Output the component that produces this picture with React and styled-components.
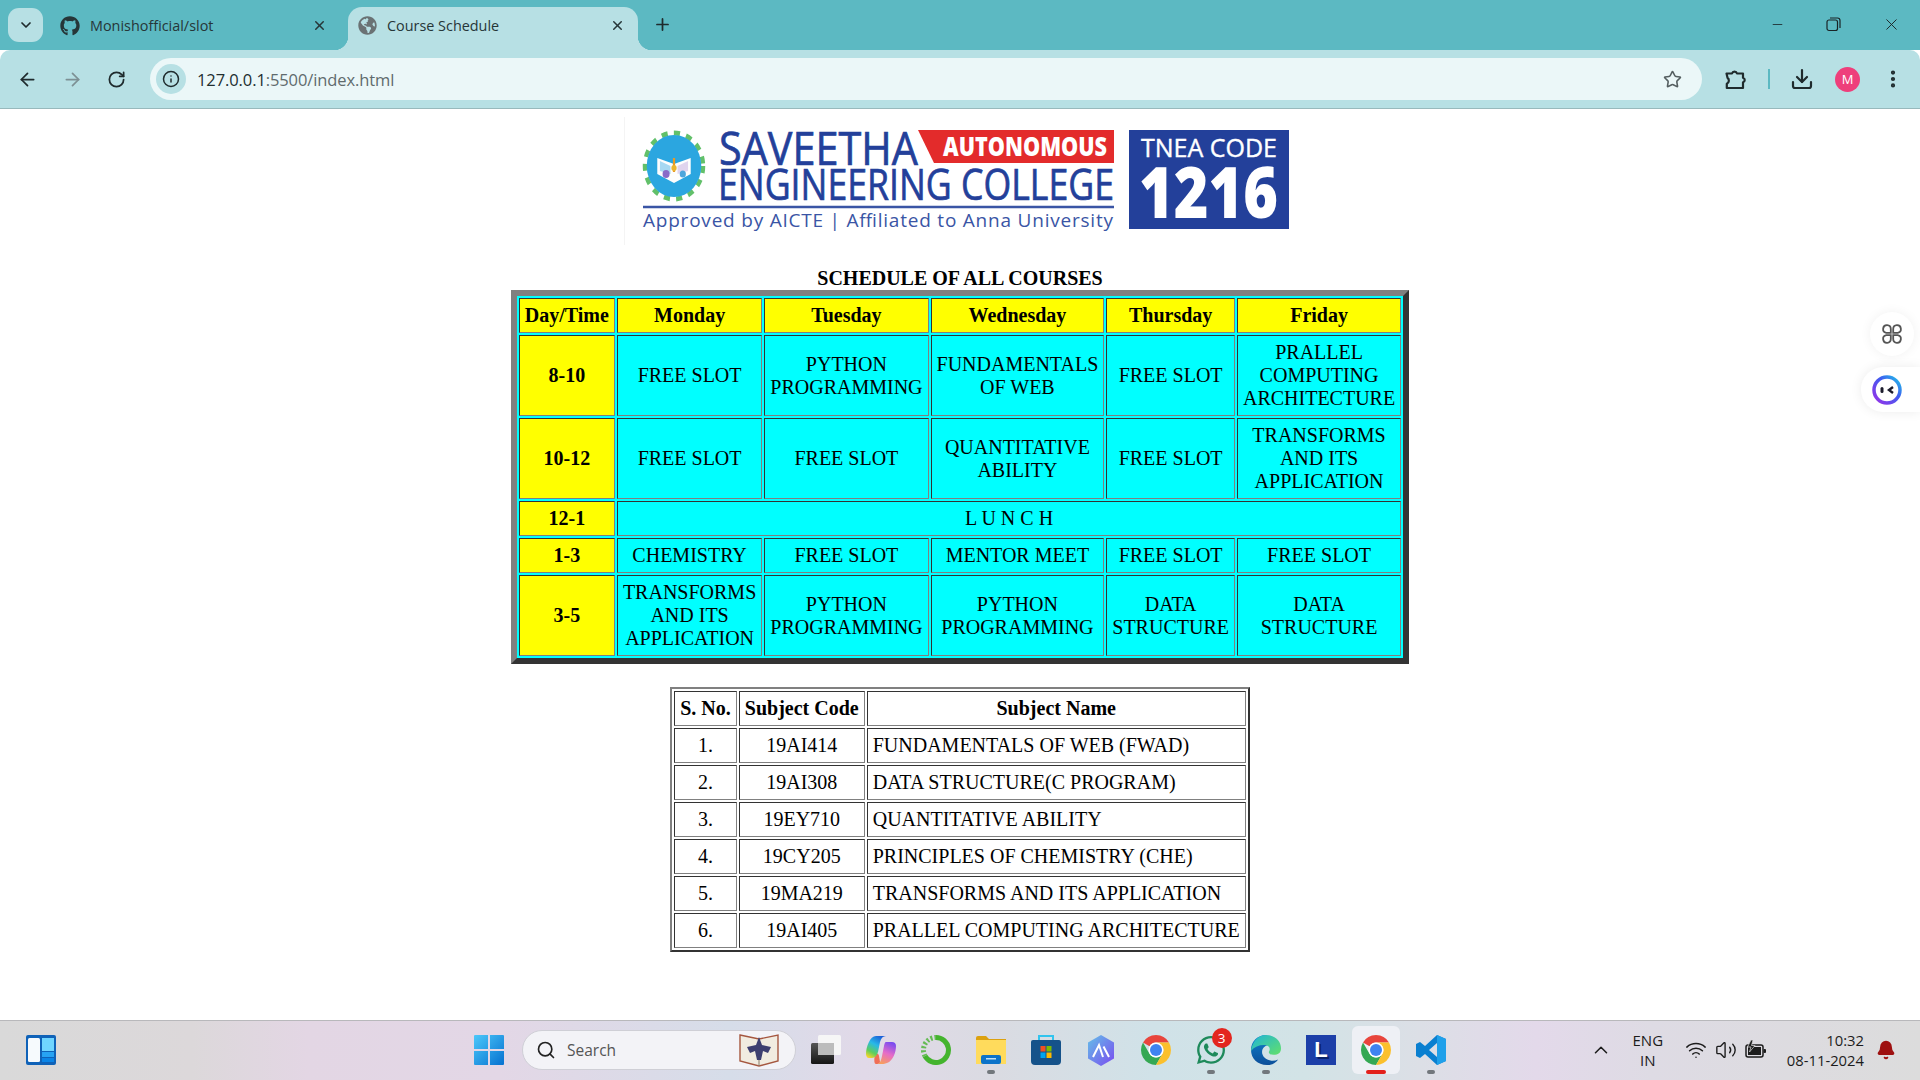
import React from "react";
import styled, { createGlobalStyle } from "styled-components";
import { ChevronDown, ChevronUp, X, Plus, Minus, ArrowLeft, ArrowRight, RotateCw, Info, Star, Download, Search, Wifi, Volume2, Bell, EllipsisVertical } from "lucide-react";
import { FaGithub, FaGlobeAmericas, FaWhatsapp } from "react-icons/fa";

const Global = createGlobalStyle`
  html, body { margin: 0; padding: 0; background: #fff; }
  body { font-family: "Open Sans", "Liberation Sans", sans-serif; overflow: hidden; }
`;

const Shell = styled.div`
  width: 1920px; height: 1080px; display: flex; flex-direction: column; overflow: hidden;
`;
const TabStrip = styled.div`
  height: 50px; flex: none; background: #5cb9c2; display: flex; align-items: flex-start; padding-left: 8px; color: #1f2b2d;
`;
const TabMenu = styled.div`
  width: 35px; height: 34px; margin-top: 8px; border-radius: 11px; background: #b7e0e4; display: flex; align-items: center; justify-content: center;
`;
const Tab = styled.div`
  position: relative; width: ${p => p.$active ? 290 : 292}px; height: 43px; margin-top: 7px; box-sizing: border-box; display: flex; align-items: center;
  margin-left: ${p => p.$gap}px; padding: 0 13px 6px ${p => p.$active ? 10 : 12}px; gap: 10px;
  font-size: 14.4px; color: #263638; border-radius: 14px 14px 0 0;
  background: ${p => p.$active ? "#b7e0e4" : "transparent"};
  ${p => p.$active && `
    &::before, &::after { content: ""; position: absolute; bottom: 0; width: 14px; height: 14px; }
    &::before { left: -14px; background: radial-gradient(circle at 0 0, transparent 14px, #b7e0e4 14.5px); }
    &::after { right: -14px; background: radial-gradient(circle at 100% 0, transparent 14px, #b7e0e4 14.5px); }
  `}
`;
const TabTitle = styled.span`
  flex: 1; white-space: nowrap;
`;
const NewTab = styled.div`
  margin: 15px 0 0 15px; display: flex;
`;
const WindowControls = styled.div`
  margin-left: auto; display: flex; align-items: center; height: 49px; padding-right: 19px; gap: 40px; color: #1a2426;
`;
const RestoreIcon = () => (
  <svg width="17" height="17" viewBox="0 0 17 17" fill="none" stroke="currentColor" strokeWidth="1.2">
    <rect x="2" y="4" width="10.5" height="10.5" rx="2" />
    <path d="M5 2h7.5a2.5 2.5 0 0 1 2.5 2.5V12" />
  </svg>
);
const PuzzleIcon = () => (
  <svg width="24" height="24" viewBox="0 0 24 24" fill="none" stroke="currentColor" strokeWidth="2.2" strokeLinejoin="round">
    <path d="M3.5 6.5H9a2.6 2.6 0 0 1 5 0H20v4.2a2.4 2.4 0 0 1 0 4.6V21H3.8v-4.2c2.6-1.4 2.6-4.6 .8-5.8Z" />
  </svg>
);
const Toolbar = styled.div`
  height: 58px; flex: none; background: #b7e0e4; border-bottom: 1px solid #98b9bc; border-radius: 10px 10px 0 0;
  display: flex; align-items: center; color: #1f2b2d;
`;
const NavGroup = styled.div`
  width: 150px; flex: none; box-sizing: border-box; padding-left: 17px; display: flex; gap: 24px; align-items: center;
`;
const Omnibox = styled.div`
  width: 1552px; height: 42px; flex: none; border-radius: 21px; background: #ebf7f8; display: flex; align-items: center; padding: 0 20px 0 6px; box-sizing: border-box;
`;
const InfoChip = styled.div`
  width: 30px; height: 30px; border-radius: 50%; background: #b7e0e4; display: flex; align-items: center; justify-content: center; margin-right: 11px;
`;
const Url = styled.div`
  font-size: 16.5px; color: #222e30; flex: 1; letter-spacing: -0.1px;
`;
const UrlRest = styled.span`
  color: #5f6b6d;
`;
const ToolIcons = styled.div`
  flex: 1; display: flex; align-items: center; padding-left: 21px;
`;
const ToolSeparator = styled.div`
  width: 2px; height: 20px; background: #5cb9c2; margin: 0 20px 0 21px;
`;
const Avatar = styled.div`
  width: 25px; height: 25px; border-radius: 50%; background: #ee3f7b; color: #fff; font-size: 13px; display: flex; align-items: center; justify-content: center; margin: 0 22px 0 21px;
`;
const Page = styled.div`
  flex: 1; background: #fff; position: relative; display: flex; flex-direction: column; align-items: center; overflow: hidden;
`;
const LogoSvg = styled.svg`
  display: block; flex: none;
`;
const Zoomed = styled.div`
  zoom: 1.25; font-family: "Liberation Serif", "Times New Roman", serif; font-size: 16px; color: #000; display: flex; flex-direction: column; align-items: center;
`;
const ScheduleTable = styled.table`
  width: 718px; border-collapse: separate; border-spacing: 2px; background: #00ffff; border: 5px solid; border-color: #808080 #333 #333 #808080;
  caption { font-weight: bold; }
`;
const SubjectTable = styled.table`
  margin-top: 18px; border-collapse: separate; border-spacing: 2px; background: #fff; border: 2px solid; border-color: #808080 #333 #333 #808080;
`;
const cell = `
  padding: 4px; border: 1px solid; border-color: #333 #808080 #808080 #333; text-align: center;
`;
const Head = styled.th`
  ${cell} font-weight: bold; background: ${p => p.$fill || "transparent"};
`;
const Cell = styled.td`
  ${cell} background: ${p => p.$fill || "transparent"}; text-align: ${p => p.$left ? "left" : "center"};
`;
const SideDot = styled.div`
  position: absolute; right: 6px; top: 203px; width: 44px; height: 44px; border-radius: 50%; background: #fff; box-shadow: 0 0 12px rgba(0,0,0,.06); display: flex; align-items: center; justify-content: center;
`;
const SidePill = styled.div`
  position: absolute; right: 0; top: 258px; width: 59px; height: 45px; border-radius: 22px 0 0 22px; background: #fff; box-shadow: 0 0 12px rgba(0,0,0,.08); display: flex; align-items: center; padding-left: 11px; box-sizing: border-box;
`;
const Taskbar = styled.div`
  height: 60px; flex: none; box-sizing: border-box; border-top: 1px solid #b8b8bb; padding-bottom: 1px; display: flex; align-items: center; position: relative;
  background: linear-gradient(90deg, #d9d9d9 0%, #dcd8da 10%, #e3d6e4 16%, #e3d7e6 26%, #d6dde9 38%, #e1d9e8 45%, #dadbe2 52%, #d0e2e8 60%, #d2e3e6 68%, #dcdfe6 74%, #e3d9ea 80%, #dedbe4 86%, #dcdcdc 100%);
`;
const Widgets = styled.div`
  width: 461px; flex: none; box-sizing: border-box; padding-left: 26px; display: flex;
`;
const Slot = styled.div`
  position: relative; width: 55px; height: 48px; flex: none; display: flex; align-items: center; justify-content: center;
  color: ${p => p.$color || "inherit"};
  ${p => p.$active && `
    &::before { content: ""; position: absolute; top: 0; bottom: 0; left: 3.5px; right: 3.5px; border-radius: 6px; background: #eef0f5; }
    & > * { position: relative; }
  `}
`;
const RunningDot = styled.span`
  position: absolute !important; bottom: 0; left: 50%; transform: translateX(-50%); height: 4px; border-radius: 2px;
  width: ${p => p.$active ? 20 : 8}px; background: ${p => p.$active ? "#e3201b" : "#72777c"};
`;
const Badge = styled.span`
  position: absolute; top: 2px; right: 7px; width: 20px; height: 20px; border-radius: 50%; background: #e3261f; color: #fff; font-size: 13.5px; display: flex; align-items: center; justify-content: center;
`;
const SearchPill = styled.div`
  width: 274px; height: 40px; flex: none; margin: 0 2.5px 0 6px; box-sizing: border-box; border-radius: 20px; background: #f3f3f7; border: 1px solid #cfcfd6; display: flex; align-items: center; padding: 0 16px 0 13px; font-size: 15.5px; color: #555;
`;
const SearchLabel = styled.span`
  flex: 1; margin-left: 11px;
`;
const Tray = styled.div`
  margin-left: auto; display: flex; align-items: center; color: #1c1c1c; padding-right: 24px;
`;
const Lang = styled.div`
  width: 50px; text-align: center; font-size: 15px; line-height: 20px; margin: 0 12px 0 11px;
`;
const TrayIcons = styled.div`
  display: flex; align-items: center; gap: 8px;
`;
const Clock = styled.div`
  text-align: right; font-size: 14.8px; line-height: 20px; margin: 0 12px 0 20px;
`;

const ChromeLogo = ({ size = 30 }) => (
  <svg width={size} height={size} viewBox="4 4 40 40">
    <path fill="#e8453c" d="M24 4A20 20 0 0 1 41.32 14H24A10 10 0 0 0 15.34 19L6.68 14A20 20 0 0 1 24 4Z" />
    <path fill="#34a853" d="M6.68 14A20 20 0 0 0 24 44L32.66 29A10 10 0 0 1 15.34 29Z" />
    <path fill="#fbc02d" d="M41.32 14H24A10 10 0 0 1 32.66 29L24 44A20 20 0 0 0 41.32 14Z" />
    <circle cx="24" cy="24" r="10" fill="#fff" />
    <circle cx="24" cy="24" r="8" fill="#3f83f0" />
  </svg>
);
const WidgetsIcon = () => (
  <svg width="30" height="30" viewBox="0 0 30 30">
    <rect x="0" y="0" width="30" height="30" rx="2" fill="#0f62b8" />
    <rect x="2" y="3" width="12" height="24" rx="1.5" fill="#f6fafd" />
    <rect x="16" y="3" width="12" height="13" fill="#6fd5ff" />
    <rect x="16" y="17" width="12" height="5" fill="#27a3f3" />
    <rect x="16" y="23" width="12" height="4" fill="#0a84e6" />
  </svg>
);
const StartIcon = () => (
  <svg width="30" height="30" viewBox="0 0 30 30">
    <defs><linearGradient id="st" x1="0" y1="0" x2="1" y2="1"><stop offset="0" stopColor="#4cc8fa" /><stop offset="1" stopColor="#0671d0" /></linearGradient></defs>
    <path fill="url(#st)" d="M1 0h13v14H0V1a1 1 0 0 1 1-1Zm15 0h13a1 1 0 0 1 1 1v13H16ZM0 16h14v14H1a1 1 0 0 1-1-1Zm16 0h14v13a1 1 0 0 1-1 1H16Z" />
  </svg>
);
const BookIcon = () => (
  <svg width="40" height="36" viewBox="0 0 40 36">
    <path d="M1 3 20 7l19-4v26l-19 5-19-5Z" fill="#f1ece0" stroke="#a5573f" strokeWidth="1.4" />
    <path d="M20 7v27" stroke="#8a7c68" />
    <path d="M20 5l3 8 9 2-3 6-5-2-2 9h-4l-2-9-5 2-3-6 9-2Z" fill="#3d3f70" />
  </svg>
);
const StackIcon = () => (
  <svg width="30" height="30" viewBox="0 0 30 30">
    <defs><linearGradient id="sk" x1="0" y1="0" x2="0" y2="1"><stop offset="0" stopColor="#555" /><stop offset="1" stopColor="#151515" /></linearGradient></defs>
    <rect x="0" y="8" width="23" height="21" rx="1.5" fill="url(#sk)" />
    <rect x="7" y="0" width="23" height="20" rx="1.5" fill="#f6f6f6" />
    <rect x="7" y="8" width="16" height="12" fill="#bcbcbc" />
  </svg>
);
const CopilotIcon = () => (
  <svg width="30" height="28" viewBox="0 0 30 28">
    <defs>
      <linearGradient id="c1" x1="0.7" y1="0" x2="0.2" y2="1"><stop offset="0" stopColor="#1c5fd8" /><stop offset=".4" stopColor="#28b8e8" /><stop offset=".75" stopColor="#5fce5a" /><stop offset="1" stopColor="#f6d42c" /></linearGradient>
      <linearGradient id="c2" x1="0.7" y1="0" x2="0.3" y2="1"><stop offset="0" stopColor="#7a4cf0" /><stop offset=".5" stopColor="#e66cc8" /><stop offset="1" stopColor="#f8a05a" /></linearGradient>
    </defs>
    <path fill="url(#c2)" d="M20 6h6c2.500 0 4 1.500 4 4 0 6-3 15-9 17-2 1-5 1-7 1h-4c4 0 5-3 6-8l2-10c.4-2 1-4 2-4Z" />
    <path fill="#f25a3c" d="M9 17c2 0 4 1 4 3l1 6c-1 1.500-2 2-4 2-2 0-2-4-1-11Z" opacity=".85" />
    <path fill="url(#c1)" d="M10 0h10c-3 0-5 2-6 6l-2 10c-1 3-3 6-6 6H3c-2 0-3-2-3-4 0-7 4-18 10-18Z" />
  </svg>
);
const RingIcon = () => (
  <svg width="30" height="30" viewBox="0 0 30 30" fill="none">
    <path d="M15 2.500A12.500 12.500 0 1 1 4 21" stroke="#44b42e" strokeWidth="5" />
    <path d="M4 21A12.500 12.500 0 0 1 15 2.500" stroke="#66bb55" strokeWidth="5" strokeDasharray="2 2" />
  </svg>
);
const FolderIcon = () => (
  <svg width="30" height="28" viewBox="0 0 30 28">
    <path fill="#dca10f" d="M0 2a2 2 0 0 1 2-2h8l3 3h17v6H0Z" />
    <rect x="0" y="4" width="30" height="24" fill="#ffdb5c" />
    <rect x="5" y="19" width="20" height="9" rx="2" fill="#0c73c9" />
    <rect x="10" y="22" width="10" height="1.500" fill="#bfe0f6" />
  </svg>
);
const StoreIcon = () => (
  <svg width="30" height="30" viewBox="0 0 30 30">
    <path d="M8 5V1h14v4" fill="none" stroke="#32c4ee" strokeWidth="2" />
    <path fill="#15528a" d="M0 7a2 2 0 0 1 2-2h26a2 2 0 0 1 2 2v19a4 4 0 0 1-4 4H4a4 4 0 0 1-4-4Z" />
    <rect x="9.500" y="11" width="5" height="5.500" fill="#f25022" />
    <rect x="15.500" y="11" width="5" height="5.500" fill="#7fba00" />
    <rect x="9.500" y="17.500" width="5" height="5.500" fill="#00a4ef" />
    <rect x="15.500" y="17.500" width="5" height="5.500" fill="#ffb900" />
  </svg>
);
const HexIcon = () => (
  <svg width="28" height="31" viewBox="0 0 28 31">
    <defs><linearGradient id="hx" x1="0" y1="0" x2="1" y2="1"><stop offset="0" stopColor="#64c0e8" /><stop offset="1" stopColor="#7a4bf0" /></linearGradient></defs>
    <path fill="url(#hx)" d="M14 0 27 7.500v16L14 31 1 23.500v-16Z" />
    <path d="M6 22 12 10l4 12M16.500 11.500 22 22" fill="none" stroke="#fff" strokeWidth="2" />
  </svg>
);
const EdgeIcon = () => (
  <svg width="30" height="30" viewBox="0 0 32 32">
    <defs>
      <linearGradient id="e1" x1="0" y1="0" x2="1" y2="1"><stop offset="0" stopColor="#1fb4d8" /><stop offset="1" stopColor="#63e06a" /></linearGradient>
      <linearGradient id="e2" x1="0" y1="0" x2="0" y2="1"><stop offset="0" stopColor="#1080cc" /><stop offset="1" stopColor="#0c4f9a" /></linearGradient>
    </defs>
    <path fill="url(#e2)" d="M16 0C7 0 0 7 0 16c0 9 7 16 17 16 5 0 9-2 12-6-6 3-15 1-17-6-1-5 2-8 6-9 2-3 3-5-2-11Z" />
    <path fill="url(#e1)" d="M16 0c9 0 16 6 16 14 0 5-3 7-8 7-3 0-5-1-5-3 2-3 1-6-3-7-5-1-12 1-16 6C1 8 7 0 16 0Z" />
  </svg>
);
const LIcon = styled.div`
  width: 30px; height: 30px; background: #1c3fa8; color: #fff; font: bold 22px "Liberation Sans", sans-serif; display: flex; align-items: center; justify-content: center; text-shadow: 2px 2px 0 #0b2268;
`;
const VsIcon = () => (
  <svg width="30" height="30" viewBox="0 0 30 30">
    <path fill="#0a7fd0" d="M21 0 30 4v22l-9 4-12-11-5 4-4-2V9l4-2 5 4ZM21 8l-8 7 8 7Z" />
    <path fill="#1fa0ea" d="M21 0 30 4v22l-9 4Z" />
  </svg>
);
const BatteryIcon = () => (
  <svg width="22" height="20" viewBox="0 0 22 20">
    <rect x="1" y="5" width="17" height="12" rx="2" fill="none" stroke="#1c1c1c" strokeWidth="1.500" />
    <rect x="3" y="7" width="13" height="8" fill="#1c1c1c" />
    <rect x="18.500" y="9" width="2.500" height="4" rx="1" fill="#1c1c1c" />
    <path d="M6 0 2.500 7H6L4.500 12 10 5.500H6.500L8 0Z" fill="#1c1c1c" stroke="#dcdcdc" strokeWidth=".7" />
  </svg>
);
const SideGridIcon = () => (
  <svg width="24" height="24" viewBox="0 0 20 20" fill="none" stroke="#555" strokeWidth="1.500">
    <path d="M9 9H5.200a3.200 3.200 0 1 1 3.800-3.200ZM11 9h3.800A3.200 3.200 0 1 0 11 5.800ZM9 11H5.200A3.200 3.200 0 1 0 9 14.200ZM11 11h3.800a3.200 3.200 0 1 1-3.800 3.200Z" />
  </svg>
);
const SideBotIcon = () => (
  <svg width="30" height="30" viewBox="0 0 30 30">
    <defs><linearGradient id="bt" x1="0" y1="1" x2="1" y2="0"><stop offset="0" stopColor="#9b30e8" /><stop offset=".6" stopColor="#3f5cf0" /><stop offset="1" stopColor="#20c4e8" /></linearGradient></defs>
    <circle cx="15" cy="15" r="13" fill="#fff" stroke="url(#bt)" strokeWidth="3.500" />
    <rect x="8.500" y="12" width="3" height="6" rx="1.500" fill="#1c1c2c" />
    <path d="M21 12l-4 3 4 3" fill="none" stroke="#1c1c2c" strokeWidth="2.400" />
  </svg>
);

const Logo = () => (
  <LogoSvg width="672" height="158" viewBox="624 109 672 158" fontFamily="'Open Sans', sans-serif">
    <line x1="624.500" y1="117" x2="624.500" y2="245" stroke="#f4f4f4" />
    <g transform="translate(674 166) scale(.88 1)">
      <circle r="33" fill="none" stroke="#62c06a" strokeWidth="5" strokeDasharray="7 7.100" />
      <circle r="31" fill="#2ba6e0" />
      <path d="M-19 -8 0 -2 19 -8V8L0 17-19 8Z" fill="#fdfdfd" />
      <path d="M-16 -5-4 0V8L-16 5Z" fill="#a8d8f2" />
      <path d="M16 -5 4 0V8L16 5Z" fill="#e0d4ee" />
      <path d="M0 -8V6" stroke="#e89a26" strokeWidth="2.500" />
      <circle cy="2" r="3" fill="#ecb42e" />
      <circle cx="-9" cy="8" r="4" fill="#8a6bc8" />
      <circle cx="10" cy="8" r="3.500" fill="#4ea6dc" />
    </g>
    <g stroke="#23409a" strokeWidth=".7">
      <text x="719" y="165" fontSize="46" fontWeight="500" fill="#23409a" textLength="199" lengthAdjust="spacingAndGlyphs">SAVEETHA</text>
      <text x="718" y="200" fontSize="44" fontWeight="500" fill="#23409a" textLength="396" lengthAdjust="spacingAndGlyphs">ENGINEERING COLLEGE</text>
    </g>
    <path d="M918 130H1114V163H934Z" fill="#e32b2b" />
    <text x="943" y="156" fontSize="26" fontWeight="800" fill="#fff" textLength="164" lengthAdjust="spacingAndGlyphs">AUTONOMOUS</text>
    <line x1="643" y1="207" x2="1114" y2="207" stroke="#3a55a5" strokeWidth="2.500" />
    <text x="643" y="227" fontSize="19" fontWeight="500" fill="#3a55a5" textLength="470" lengthAdjust="spacing">Approved by AICTE  |  Affiliated to Anna University</text>
    <rect x="1129" y="130" width="160" height="99" fill="#23409a" />
    <text x="1141" y="157" fontSize="26" fontWeight="500" fill="#fff" stroke="#fff" strokeWidth=".4" textLength="136" lengthAdjust="spacingAndGlyphs">TNEA CODE</text>
    <text x="1139" y="218" fontSize="70" fontWeight="800" fill="#fff" textLength="139" lengthAdjust="spacingAndGlyphs">1216</text>
  </LogoSvg>
);

const header = ["Day/Time", "Monday", "Tuesday", "Wednesday", "Thursday", "Friday"];
const F = "FREE SLOT";
const rows = [
  ["8-10", [F, "PYTHON PROGRAMMING", "FUNDAMENTALS OF WEB", F, "PRALLEL COMPUTING ARCHITECTURE"]],
  ["10-12", [F, F, "QUANTITATIVE ABILITY", F, "TRANSFORMS AND ITS APPLICATION"]],
  ["12-1", null],
  ["1-3", ["CHEMISTRY", F, "MENTOR MEET", F, F]],
  ["3-5", ["TRANSFORMS AND ITS APPLICATION", "PYTHON PROGRAMMING", "PYTHON PROGRAMMING", "DATA STRUCTURE", "DATA STRUCTURE"]],
];
const subjects = [
  ["1.", "19AI414", "FUNDAMENTALS OF WEB (FWAD)"],
  ["2.", "19AI308", "DATA STRUCTURE(C PROGRAM)"],
  ["3.", "19EY710", "QUANTITATIVE ABILITY"],
  ["4.", "19CY205", "PRINCIPLES OF CHEMISTRY (CHE)"],
  ["5.", "19MA219", "TRANSFORMS AND ITS APPLICATION"],
  ["6.", "19AI405", "PRALLEL COMPUTING ARCHITECTURE"],
];

export default function App() {
  return (
    <Shell>
      <Global />
      <TabStrip>
        <TabMenu><ChevronDown size={16} strokeWidth={2.6} /></TabMenu>
        <Tab $gap={5}>
          <FaGithub size={20} />
          <TabTitle>Monishofficial/slot</TabTitle>
          <X size={15} strokeWidth={2.4} />
        </Tab>
        <Tab $active $gap={8}>
          <FaGlobeAmericas size={19} color="#6a7274" />
          <TabTitle>Course Schedule</TabTitle>
          <X size={15} strokeWidth={2.4} />
        </Tab>
        <NewTab><Plus size={19} strokeWidth={2.2} /></NewTab>
        <WindowControls>
          <Minus size={15} strokeWidth={1.3} />
          <RestoreIcon />
          <X size={19} strokeWidth={1.2} />
        </WindowControls>
      </TabStrip>
      <Toolbar>
        <NavGroup>
          <ArrowLeft size={21} strokeWidth={2} />
          <ArrowRight size={21} strokeWidth={2} color="#7d9094" />
          <RotateCw size={19} strokeWidth={2.2} />
        </NavGroup>
        <Omnibox>
          <InfoChip><Info size={18} strokeWidth={2} /></InfoChip>
          <Url>127.0.0.1<UrlRest>:5500/index.html</UrlRest></Url>
          <Star size={19} strokeWidth={2} color="#555f61" />
        </Omnibox>
        <ToolIcons>
          <PuzzleIcon />
          <ToolSeparator />
          <Download size={24} strokeWidth={2.2} />
          <Avatar>M</Avatar>
          <EllipsisVertical size={22} strokeWidth={2.6} />
        </ToolIcons>
      </Toolbar>
      <Page>
        <Logo />
        <Zoomed>
          <ScheduleTable>
            <caption>SCHEDULE OF ALL COURSES</caption>
            <tbody>
              <tr>{header.map(h => <Head key={h} $fill="#ffff00">{h}</Head>)}</tr>
              {rows.map(([time, cells]) => (
                <tr key={time}>
                  <Head $fill="#ffff00">{time}</Head>
                  {cells
                    ? cells.map((c, i) => <Cell key={i} $fill="#00ffff">{c}</Cell>)
                    : <Cell colSpan={5} $fill="#00ffff">L U N C H</Cell>}
                </tr>
              ))}
            </tbody>
          </ScheduleTable>
          <SubjectTable>
            <tbody>
              <tr><Head>S. No.</Head><Head>Subject Code</Head><Head>Subject Name</Head></tr>
              {subjects.map(s => (
                <tr key={s[0]}><Cell>{s[0]}</Cell><Cell>{s[1]}</Cell><Cell $left>{s[2]}</Cell></tr>
              ))}
            </tbody>
          </SubjectTable>
        </Zoomed>
        <SideDot><SideGridIcon /></SideDot>
        <SidePill><SideBotIcon /></SidePill>
      </Page>
      <Taskbar>
        <Widgets><WidgetsIcon /></Widgets>
        <Slot><StartIcon /></Slot>
        <SearchPill>
          <Search size={20} strokeWidth={2} color="#222" />
          <SearchLabel>Search</SearchLabel>
          <BookIcon />
        </SearchPill>
        <Slot><StackIcon /></Slot>
        <Slot><CopilotIcon /></Slot>
        <Slot><RingIcon /></Slot>
        <Slot><FolderIcon /><RunningDot /></Slot>
        <Slot><StoreIcon /></Slot>
        <Slot><HexIcon /></Slot>
        <Slot><ChromeLogo /></Slot>
        <Slot $color="#1e8a5b"><FaWhatsapp size={32} /><Badge>3</Badge><RunningDot /></Slot>
        <Slot><EdgeIcon /><RunningDot /></Slot>
        <Slot><LIcon>L</LIcon></Slot>
        <Slot $active><ChromeLogo /><RunningDot $active /></Slot>
        <Slot><VsIcon /><RunningDot /></Slot>
        <Tray>
          <ChevronUp size={22} strokeWidth={1.7} />
          <Lang>ENG<br />IN</Lang>
          <TrayIcons>
            <Wifi size={22} strokeWidth={1.7} />
            <Volume2 size={22} strokeWidth={1.5} />
            <BatteryIcon />
          </TrayIcons>
          <Clock>10:32<br />08-11-2024</Clock>
          <Bell size={20} fill="#9e1010" color="#9e1010" />
        </Tray>
      </Taskbar>
    </Shell>
  );
}
